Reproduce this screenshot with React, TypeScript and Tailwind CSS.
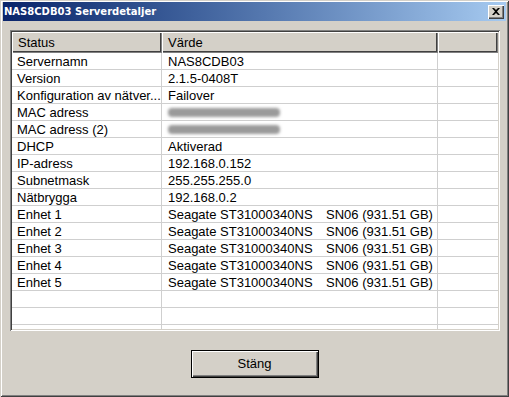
import React from 'react';

const rows: { label: string; value?: string; extra?: string; blur?: boolean }[] = [
  { label: 'Servernamn', value: 'NAS8CDB03' },
  { label: 'Version', value: '2.1.5-0408T' },
  { label: 'Konfiguration av nätver...', value: 'Failover' },
  { label: 'MAC adress', blur: true },
  { label: 'MAC adress (2)', blur: true },
  { label: 'DHCP', value: 'Aktiverad' },
  { label: 'IP-adress', value: '192.168.0.152' },
  { label: 'Subnetmask', value: '255.255.255.0' },
  { label: 'Nätbrygga', value: '192.168.0.2' },
  { label: 'Enhet 1', value: 'Seagate ST31000340NS', extra: 'SN06 (931.51 GB)' },
  { label: 'Enhet 2', value: 'Seagate ST31000340NS', extra: 'SN06 (931.51 GB)' },
  { label: 'Enhet 3', value: 'Seagate ST31000340NS', extra: 'SN06 (931.51 GB)' },
  { label: 'Enhet 4', value: 'Seagate ST31000340NS', extra: 'SN06 (931.51 GB)' },
  { label: 'Enhet 5', value: 'Seagate ST31000340NS', extra: 'SN06 (931.51 GB)' },
  { label: '' },
  { label: '' },
  { label: '' },
];

export default function App() {
  return (
    <div
      className="w-[509px] h-[397px] bg-[#d4d0c8] flex flex-col pt-[2px] px-[3px] shadow-[inset_1px_1px_0_#d4d0c8,inset_-1px_-1px_0_#404040,inset_2px_2px_0_#ffffff,inset_-2px_-2px_0_#808080] overflow-hidden"
      style={{ fontFamily: '"Liberation Sans", Arial, sans-serif' }}
    >
      {/* Title bar */}
      <div className="h-[19px] flex items-center justify-between bg-gradient-to-r from-[#0a246a] to-[#a6caf0] pl-[1px] pr-[2px]">
        <span className="text-white font-bold text-[10px]" style={{ fontFamily: '"DejaVu Sans", Tahoma, sans-serif' }}>
          NAS8CDB03 Serverdetaljer
        </span>
        <div className="w-[16px] h-[14px] bg-[#d4d0c8] flex items-center justify-center shadow-[inset_1px_1px_0_#ffffff,inset_-1px_-1px_0_#404040,inset_-2px_-2px_0_#808080]">
          <svg width="8" height="7" viewBox="0 0 8 7">
            <path d="M0 0h2l2 2 2-2h2L5 3.5 8 7H6L4 5 2 7H0l3-3.5z" fill="#000" />
          </svg>
        </div>
      </div>

      {/* List view */}
      <div className="mt-[9px] ml-[7px] w-[490px] h-[301px] bg-white flex flex-col overflow-hidden shadow-[inset_1px_1px_0_#808080,inset_-1px_-1px_0_#ffffff,inset_2px_2px_0_#404040,inset_-2px_-2px_0_#d4d0c8] p-[2px]">
        <div className="flex h-[21px] text-[13px] text-black shrink-0">
          <div className="w-[150px] bg-[#d4d0c8] pl-[6px] flex items-center shadow-[inset_1px_1px_0_#ffffff,inset_-1px_-1px_0_#808080,inset_-2px_-2px_0_#404040]">Status</div>
          <div className="w-[276px] bg-[#d4d0c8] pl-[6px] flex items-center shadow-[inset_1px_1px_0_#ffffff,inset_-1px_-1px_0_#808080,inset_-2px_-2px_0_#404040]">Värde</div>
          <div className="flex-1 bg-[#d4d0c8] shadow-[inset_1px_1px_0_#ffffff,inset_-1px_-1px_0_#808080,inset_-2px_-2px_0_#404040]" />
        </div>
        <div className="flex-1 overflow-hidden">
          {rows.map((r, i) => (
            <div key={i} className="flex h-[17px] border-b border-[#cfcfcf] text-[13px] leading-[16px] text-black">
              <div className="w-[150px] pl-[5px] pt-[1px] border-r border-[#cfcfcf] whitespace-nowrap overflow-hidden">{r.label}</div>
              <div className="w-[276px] pl-[6px] pt-[1px] border-r border-[#cfcfcf] flex items-center whitespace-nowrap overflow-hidden">
                {r.blur ? (
                  <div className="w-[112px] h-[9px] bg-[#9a9a9a] rounded-[4px] blur-[1.5px]" />
                ) : (
                  <>
                    <span className={r.extra ? 'w-[158px] shrink-0' : ''}>{r.value}</span>
                    {r.extra && <span>{r.extra}</span>}
                  </>
                )}
              </div>
              <div className="flex-1" />
            </div>
          ))}
        </div>
      </div>

      {/* Button */}
      <div className="flex justify-center mt-[19px]">
        <button className="w-[128px] h-[28px] bg-[#d4d0c8] border border-black text-[13px] text-black shadow-[inset_1px_1px_0_#ffffff,inset_-1px_-1px_0_#404040,inset_-2px_-2px_0_#808080]">
          Stäng
        </button>
      </div>
    </div>
  );
}
